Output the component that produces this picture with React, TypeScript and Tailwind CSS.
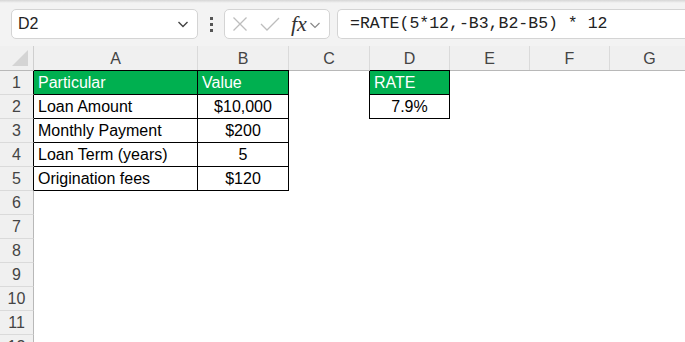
import React from "react";

const font = { fontFamily: '"Liberation Sans", Arial, sans-serif' };

const colW = [34, 164, 91, 81, 80, 80, 80, 80];
const colNames = ["", "A", "B", "C", "D", "E", "F", "G"];

type Cell = { text?: string; green?: boolean; box?: boolean; align?: "left" | "center" };

const data: Record<number, Record<number, Cell>> = {
  1: {
    1: { text: "Particular", green: true, box: true },
    2: { text: "Value", green: true, box: true },
    4: { text: "RATE", green: true, box: true },
  },
  2: {
    1: { text: "Loan Amount", box: true },
    2: { text: "$10,000", box: true, align: "center" },
    4: { text: "7.9%", box: true, align: "center" },
  },
  3: {
    1: { text: "Monthly Payment", box: true },
    2: { text: "$200", box: true, align: "center" },
  },
  4: {
    1: { text: "Loan Term (years)", box: true },
    2: { text: "5", box: true, align: "center" },
  },
  5: {
    1: { text: "Origination fees", box: true },
    2: { text: "$120", box: true, align: "center" },
  },
};

function Row({ n }: { n: number }) {
  const r = data[n] || {};
  const hasBoxAt = (c: number) => !!r[c]?.box;
  return (
    <div className="flex h-[24px] shrink-0">
      <div
        className={`w-[34px] shrink-0 h-full box-border border-b border-r border-b-[#dadada] bg-[#f0f0f0] flex items-center justify-center text-[16px] text-[#444] pt-[1px] ${
          hasBoxAt(1) ? "border-r-black" : "border-r-[#b8b8b8]"
        }`}
      >
        {n}
      </div>
      {colW.slice(1).map((w, i) => {
        const c = i + 1;
        const cell = r[c];
        const nextBox = hasBoxAt(c + 1);
        let cls = "shrink-0 h-full box-border flex items-center text-[16px] relative ";
        if (cell?.box) {
          cls += "border-r border-b border-black ";
          if (n === 1) cls += "shadow-[0_-1px_0_#000] z-10 ";
        } else if (nextBox) {
          cls += "border-r border-black ";
        }
        if (cell?.green) cls += "bg-[#00b050] text-white ";
        else cls += "text-black ";
        if (cell?.align === "center") cls += "justify-center ";
        else cls += "pl-[4px] ";
        return (
          <div key={c} className={cls} style={{ width: w }}>
            {cell?.text && <span className="pt-[1px]">{cell.text}</span>}
          </div>
        );
      })}
    </div>
  );
}

export default function App() {
  return (
    <div className="w-[685px] h-[342px] overflow-hidden bg-white flex flex-col" style={font}>
      <div className="h-[46px] shrink-0 bg-[#f3f3f3] flex flex-col">
        <div className="h-[3px] bg-gradient-to-b from-[#d6d6d6] to-[#f3f3f3]" />
        <div className="flex items-center pl-[11px] pt-[6px] gap-0">
          <div className="w-[187px] h-[30px] bg-white border border-[#d4d4d4] rounded-[5px] flex items-center justify-between pl-[6px] pr-[7px] box-border">
            <span className="text-[16px] text-[#222]">D2</span>
            <svg width="14" height="14" viewBox="0 0 14 14">
              <path d="M2.5 5 L7 9.5 L11.5 5" fill="none" stroke="#444" strokeWidth="1.4" />
            </svg>
          </div>
          <div className="w-[26px] flex flex-col items-center justify-center gap-[3px]">
            <div className="w-[3px] h-[3px] bg-[#555]" />
            <div className="w-[3px] h-[3px] bg-[#555]" />
            <div className="w-[3px] h-[3px] bg-[#555]" />
          </div>
          <div className="w-[106px] h-[30px] bg-white border border-[#d4d4d4] rounded-[5px] flex items-center box-border pl-[7px]">
            <svg width="16" height="16" viewBox="0 0 16 16">
              <path d="M1.5 1.5 L14.5 14.5 M14.5 1.5 L1.5 14.5" stroke="#bdbdbd" strokeWidth="1.3" fill="none" />
            </svg>
            <svg width="22" height="16" viewBox="0 0 22 16" className="ml-[11px]">
              <path d="M2 8 L8 14 L20 2" stroke="#bdbdbd" strokeWidth="1.3" fill="none" />
            </svg>
            <span
              className="ml-[10px] text-[22px] italic text-[#333] leading-none"
              style={{ fontFamily: '"Liberation Serif", "Times New Roman", serif' }}
            >
              fx
            </span>
            <svg width="12" height="10" viewBox="0 0 12 10" className="ml-[2px] mt-[2px]">
              <path d="M1.5 3 L6 7.5 L10.5 3" fill="none" stroke="#888" strokeWidth="1.2" />
            </svg>
          </div>
          <div className="ml-[7px] flex-1 h-[30px] bg-white border border-[#d4d4d4] border-r-0 rounded-l-[5px] flex items-center box-border pl-[12px]">
            <span
              className="text-[16.5px] text-[#222]"
              style={{ fontFamily: '"Liberation Mono", "Courier New", monospace' }}
            >
              =RATE(5*12,-B3,B2-B5) * 12
            </span>
          </div>
        </div>
      </div>
      <div className="flex h-[25px] shrink-0 bg-[#f0f0f0] border-b border-[#b8b8b8] box-border">
        {colNames.map((name, i) => (
          <div
            key={i}
            className={`shrink-0 h-full box-border flex items-center justify-center text-[16px] text-[#444] pt-[1px] ${
              i === 0 ? "border-r border-[#cfcfcf] relative" : "border-r border-[#dadada]"
            }`}
            style={{ width: colW[i] }}
          >
            {i === 0 ? (
              <svg width="20" height="20" viewBox="0 0 20 20" className="absolute right-[3px] bottom-[2px]">
                <path d="M18 2 L18 18 L2 18 Z" fill="#d4d4d4" />
              </svg>
            ) : (
              name
            )}
          </div>
        ))}
      </div>
      {Array.from({ length: 12 }, (_, i) => (
        <Row key={i + 1} n={i + 1} />
      ))}
    </div>
  );
}
